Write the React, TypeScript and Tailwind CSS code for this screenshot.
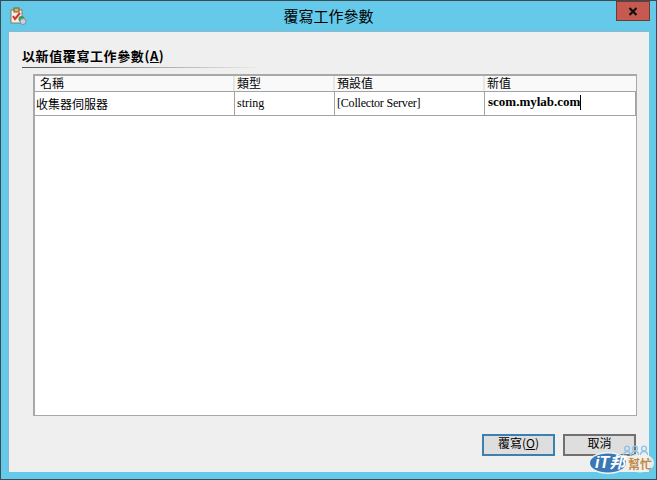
const ui = { fontFamily: '"Noto Sans CJK TC", sans-serif' };
const serifCls = "[font-family:'Liberation_Serif','Noto_Sans_CJK_TC',serif]";

function AppIcon() {
  return (
    <svg width="18" height="18" viewBox="0 0 18 18" className="shrink-0">
      <rect x="2" y="3" width="11" height="13" fill="#f4f1e6" stroke="#8a7a5c" />
      <rect x="5" y="1" width="5" height="4" fill="#d9b45a" stroke="#7a6030" />
      <path d="M4 9l2 3 5-6" fill="none" stroke="#d8342a" strokeWidth="2" />
      <circle cx="12.5" cy="12" r="3" fill="#3f9d3f" />
      <circle cx="14" cy="14.5" r="3" fill="#c3d3e4" stroke="#7d8fa3" />
    </svg>
  );
}

function Logo() {
  return (
    <div className="absolute bottom-[4px] right-[2px] w-[66px] h-[30px]">
      <svg width="66" height="30" viewBox="0 0 66 30" className="absolute inset-0">
        <ellipse cx="52" cy="18" rx="14" ry="9.5" fill="#f1efe9" opacity="0.9" />
        <g fill="none" stroke="#8fc4e8" strokeWidth="1.4">
          <circle cx="39" cy="3.5" r="2.4" />
          <circle cx="47" cy="3.5" r="2.4" />
          <circle cx="56" cy="3.5" r="2.4" />
          <path d="M35.5 11c0-3 1.5-4.5 3.5-4.5s3.5 1.5 3.5 4.5" />
          <path d="M43.5 10c0-2.5 1.5-3.5 3.5-3.5s3.5 1 3.5 3.5" />
          <path d="M52.5 10c0-2.5 1.5-3.5 3.5-3.5s3.5 1 3.5 3.5" />
        </g>
        <ellipse cx="20" cy="18" rx="19.5" ry="11" fill="#eef2f5" />
        <ellipse cx="20" cy="18" rx="18" ry="9.5" fill="#3a78b5" />
      </svg>
      <span className="absolute left-[7px] top-[7px] text-[16px] leading-[21px] font-bold italic text-white whitespace-nowrap [font-family:'Liberation_Sans','Noto_Sans_CJK_TC',sans-serif]">
        iT邦
      </span>
      <span className="absolute left-[40px] top-[12px] text-[12px] leading-[14px] font-bold text-[#c08a4c] whitespace-nowrap [font-family:'Noto_Sans_CJK_TC',sans-serif]">
        幫忙
      </span>
    </div>
  );
}

const columns = [
  { label: "名稱", w: "w-[200px]" },
  { label: "類型", w: "w-[100px]" },
  { label: "預設值", w: "w-[150px]" },
  { label: "新值", w: "flex-1" },
];

export default function App() {
  return (
    <div style={ui} className="relative w-[657px] h-[480px] overflow-hidden flex flex-col bg-[#65c9ea] border border-[#3c4a52] text-black">
      <div className="h-[30px] flex items-center shrink-0 relative">
        <div className="pl-[8px]"><AppIcon /></div>
        <div className="flex-1 text-center text-[15px] leading-[20px] pl-[20px] pr-[6px]">覆寫工作參數</div>
        <div className="w-[34px] h-[20px] mr-[6px] -mt-[10px] bg-[#c75a50] border border-[#6e3a36] flex items-center justify-center">
          <svg width="10" height="9" viewBox="0 0 10 9"><path d="M1.5 1l7 7M8.5 1l-7 7" stroke="#101010" strokeWidth="2.2" /></svg>
        </div>
      </div>
      <div className="mx-[7px] h-[441px] bg-[#efefef] border border-[#8fb7c9] border-b-0 border-r-0 shrink-0 flex flex-col">
        <div className="pl-[13px] pt-[14px] text-[13px] leading-[19px] font-bold tracking-[0.6px]">以新值覆寫工作參數(<span className="underline">A</span>)</div>
        <div className="ml-[13px] mt-[2px] h-px w-[240px] bg-gradient-to-r from-[#555555] to-[#efefef]" />
        <div className="ml-[24px] mt-[6px] w-[604px] h-[342px] bg-white border-2 border-[#a8a8a8] border-b border-r flex flex-col">
          <div className="h-[15px] flex bg-[#f9f9f9] text-[12px] leading-[13px] shrink-0 border-b-0">
            {columns.map((c, i) => (
              <div key={c.label} className={`${c.w} ${i === 0 ? "pl-[5px]" : "pl-[2px]"} border-r-2 border-[#e6e6e6] last:border-r-0`}>{c.label}</div>
            ))}
          </div>
          <div className="h-[25px] flex border-y border-[#a3a3a3] text-[12px] leading-[23px] shrink-0 border-r border-r-[#a3a3a3]">
            <div className="w-[200px] border-r border-[#a3a3a3] pl-[1px]">收集器伺服器</div>
            <div className={`w-[100px] border-r border-[#a3a3a3] pl-[2px] ${serifCls}`}>string</div>
            <div className={`w-[150px] border-r border-[#a3a3a3] pl-[2px] tracking-[-0.2px] ${serifCls}`}>[Collector Server]</div>
            <div className="flex-1 pl-[3px] flex items-start">
              <span className={`text-[13px] leading-[20px] font-bold ${serifCls}`}>scom.mylab.com</span>
              <span className="w-px h-[15px] mt-[3px] bg-black" />
            </div>
          </div>
        </div>
        <div className="flex justify-end gap-[8px] mt-[18px] pr-[13px]">
          <button className="w-[73px] h-[22px] bg-[#dedede] border-2 border-[#3c7fb1] text-[12px] leading-[14px] pb-[5px]">覆寫(<span className="underline">O</span>)</button>
          <button className="w-[73px] h-[22px] bg-[#dedede] border-2 border-[#707070] text-[12px] leading-[14px] pb-[5px]">取消</button>
        </div>
      </div>
      <Logo />
    </div>
  );
}
